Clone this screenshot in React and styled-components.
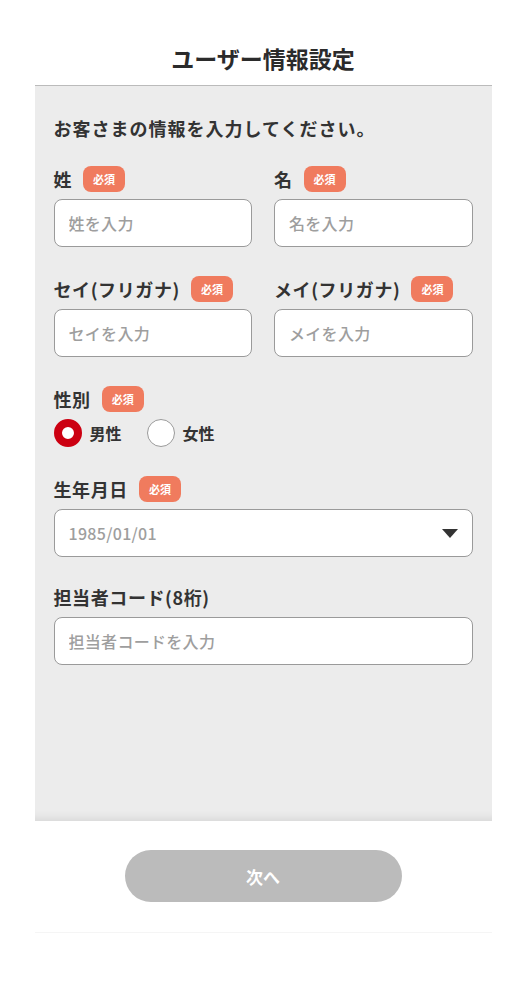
import React, { useState } from "react"
import styled, { createGlobalStyle } from "styled-components"

const GlobalStyle = createGlobalStyle`
  * {
    box-sizing: border-box;
  }
  body {
    margin: 0;
    background: #ffffff;
    font-family: "Noto Sans CJK JP", "Noto Sans", sans-serif;
    color: #333333;
  }
`

const Page = styled.div`
  width: 457px;
  margin: 0 auto;
`

const Header = styled.header`
  padding: 42px 0 11px;
  border-bottom: 1px solid #bbbbbb;
  text-align: center;
`

const Title = styled.h1`
  margin: 0;
  font-size: 23px;
  line-height: 32px;
  font-weight: 700;
  color: #2b2b2b;
`

const Panel = styled.main`
  height: 735px;
  background: #ececec;
  padding: 28px 19px 0;
  box-shadow: inset 0 -10px 10px -8px rgba(0, 0, 0, 0.1);
`

const Intro = styled.p`
  margin: 0 0 24px;
  font-size: 18px;
  line-height: 28px;
  letter-spacing: 1px;
  font-weight: 700;
  color: #333333;
`

const Row = styled.div`
  display: grid;
  grid-template-columns: 1fr 1fr;
  gap: 22px;
  margin-bottom: 29px;
`

const Field = styled.div`
  display: flex;
  flex-direction: column;
  margin-bottom: ${(p) => p.$gap ?? 29}px;
`

const LabelRow = styled.div`
  display: flex;
  align-items: center;
  gap: 11px;
  height: 26px;
  margin-bottom: 7px;
`

const Label = styled.label`
  font-size: 18px;
  font-weight: 700;
  letter-spacing: 0.6px;
  color: #333333;
  line-height: 26px;
`

const Badge = styled.span`
  display: inline-flex;
  align-items: center;
  justify-content: center;
  height: 26px;
  padding: 0 10px;
  border-radius: 8px;
  background: #f07b5e;
  color: #ffffff;
  font-size: 11px;
  font-weight: 700;
`

const TextInput = styled.input`
  width: 100%;
  height: 48px;
  padding: 0 14px;
  border: 1px solid #9a9a9a;
  border-radius: 8px;
  background: #ffffff;
  font-family: inherit;
  font-size: 16px;
  font-weight: 500;
  letter-spacing: 0.3px;
  color: #333333;
  outline: none;

  &::placeholder {
    color: #9e9e9e;
  }
`

const SelectWrap = styled.div`
  position: relative;
`

const Select = styled.select`
  width: 100%;
  height: 48px;
  padding: 0 14px;
  border: 1px solid #9a9a9a;
  border-radius: 8px;
  background: #ffffff;
  appearance: none;
  font-family: inherit;
  font-size: 16px;
  font-weight: 500;
  letter-spacing: 0.3px;
  color: #9e9e9e;
  outline: none;
`

const Arrow = styled.svg`
  position: absolute;
  right: 15px;
  top: 20px;
  pointer-events: none;
`

const RadioGroup = styled.div`
  display: flex;
  align-items: center;
  gap: 25px;
  height: 28px;
`

const RadioOption = styled.label`
  display: flex;
  align-items: center;
  gap: 8px;
  cursor: pointer;
  font-size: 16px;
  font-weight: 700;
  color: #333333;
`

const RadioCircle = styled.span`
  width: 28px;
  height: 28px;
  border-radius: 50%;
  background: #ffffff;
  border: ${(p) => (p.$checked ? "8px solid #cc0011" : "1px solid #9a9a9a")};
`

const HiddenRadio = styled.input`
  display: none;
`

const Footer = styled.footer`
  display: flex;
  justify-content: center;
  padding: 29px 0 30px;
  border-bottom: 1px solid #f5f5f5;
`

const NextButton = styled.button`
  width: 277px;
  height: 52px;
  border: none;
  border-radius: 26px;
  background: #bbbbbb;
  color: #ffffff;
  font-family: inherit;
  font-size: 17px;
  font-weight: 700;
  cursor: not-allowed;
`

const Required = () => <Badge>必須</Badge>

const App = () => {
  const [gender, setGender] = useState("male")

  const genders = [
    { value: "male", label: "男性" },
    { value: "female", label: "女性" },
  ]

  return (
    <>
      <GlobalStyle />
      <Page>
        <Header>
          <Title>ユーザー情報設定</Title>
        </Header>

        <Panel>
          <Intro>お客さまの情報を入力してください。</Intro>

          <Row>
            <div>
              <LabelRow>
                <Label>姓</Label>
                <Required />
              </LabelRow>
              <TextInput placeholder="姓を入力" />
            </div>
            <div>
              <LabelRow>
                <Label>名</Label>
                <Required />
              </LabelRow>
              <TextInput placeholder="名を入力" />
            </div>
          </Row>

          <Row>
            <div>
              <LabelRow>
                <Label>セイ(フリガナ)</Label>
                <Required />
              </LabelRow>
              <TextInput placeholder="セイを入力" />
            </div>
            <div>
              <LabelRow>
                <Label>メイ(フリガナ)</Label>
                <Required />
              </LabelRow>
              <TextInput placeholder="メイを入力" />
            </div>
          </Row>

          <Field>
            <LabelRow>
              <Label>性別</Label>
              <Required />
            </LabelRow>
            <RadioGroup>
              {genders.map((g) => (
                <RadioOption key={g.value}>
                  <HiddenRadio
                    type="radio"
                    name="gender"
                    checked={gender === g.value}
                    onChange={() => setGender(g.value)}
                  />
                  <RadioCircle $checked={gender === g.value} />
                  {g.label}
                </RadioOption>
              ))}
            </RadioGroup>
          </Field>

          <Field $gap={27}>
            <LabelRow>
              <Label>生年月日</Label>
              <Required />
            </LabelRow>
            <SelectWrap>
              <Select defaultValue="1985-01-01">
                <option value="1985-01-01">1985/01/01</option>
              </Select>
              <Arrow width="16" height="9" viewBox="0 0 16 9">
                <path d="M0 0 H16 L8 9 Z" fill="#333333" />
              </Arrow>
            </SelectWrap>
          </Field>

          <Field $gap={0}>
            <LabelRow>
              <Label>担当者コード(8桁)</Label>
            </LabelRow>
            <TextInput placeholder="担当者コードを入力" />
          </Field>
        </Panel>

        <Footer>
          <NextButton disabled>次へ</NextButton>
        </Footer>
      </Page>
    </>
  )
}

export default App
